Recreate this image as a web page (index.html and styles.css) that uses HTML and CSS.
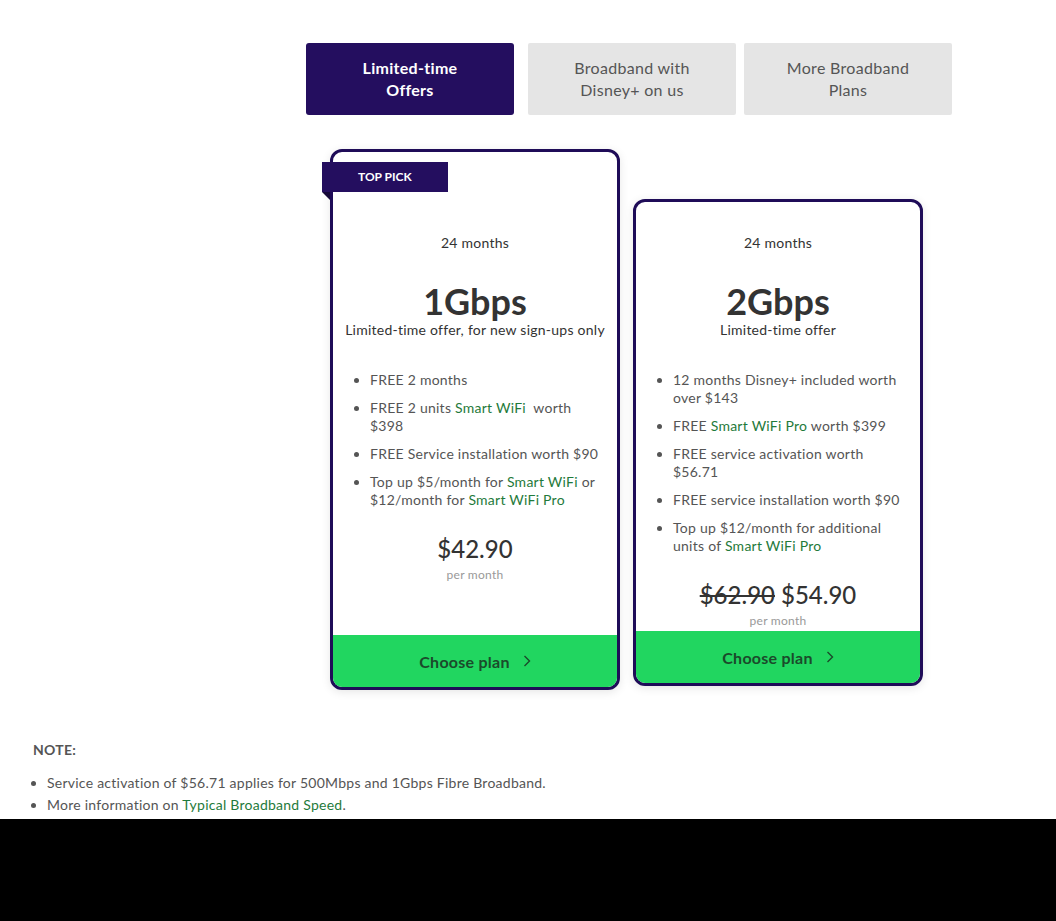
FILE: index.html
```html
<!DOCTYPE html>
<html>
<head>
    <title>Fibre Broadband Plans</title>
    <meta name="viewport" content="width=device-width, initial-scale=1.0">
    <link rel="stylesheet" href="styles.css">
</head>
<body>
    <main class="plans">
        <nav class="tabs">
            <a class="tab active">Limited-time Offers</a>
            <a class="tab">Broadband with Disney+ on us</a>
            <a class="tab">More Broadband Plans</a>
        </nav>

        <div class="cards">
            <!-- 1Gbps plan -->
            <div class="card featured">
                <span class="ribbon">TOP PICK</span>
                <div class="card-body">
                    <p class="term">24 months</p>
                    <h2 class="speed">1Gbps</h2>
                    <p class="tagline">Limited-time offer, for new sign-ups only</p>
                    <ul class="perks">
                        <li>FREE 2 months</li>
                        <li>FREE 2 units <a>Smart WiFi</a>&nbsp; worth $398</li>
                        <li>FREE Service installation worth $90</li>
                        <li>Top up $5/month for <a>Smart WiFi</a> or $12/month for <a>Smart WiFi Pro</a></li>
                    </ul>
                    <div class="price-block">
                        <p class="price">$42.90</p>
                        <p class="per">per month</p>
                    </div>
                </div>
                <a class="choose">Choose plan
                    <svg width="8" height="12" viewBox="0 0 8 12"><polyline points="1.5,1 6.5,6 1.5,11" fill="none" stroke="#1b4a2b" stroke-width="1.4"/></svg>
                </a>
            </div>

            <!-- 2Gbps plan -->
            <div class="card">
                <div class="card-body">
                    <p class="term">24 months</p>
                    <h2 class="speed">2Gbps</h2>
                    <p class="tagline">Limited-time offer</p>
                    <ul class="perks">
                        <li>12 months Disney+ included worth over $143</li>
                        <li>FREE <a>Smart WiFi Pro</a> worth $399</li>
                        <li>FREE service activation worth $56.71</li>
                        <li>FREE service installation worth $90</li>
                        <li>Top up $12/month for additional units of <a>Smart WiFi Pro</a></li>
                    </ul>
                    <div class="price-block">
                        <p class="price"><s>$62.90</s> $54.90</p>
                        <p class="per">per month</p>
                    </div>
                </div>
                <a class="choose">Choose plan
                    <svg width="8" height="12" viewBox="0 0 8 12"><polyline points="1.5,1 6.5,6 1.5,11" fill="none" stroke="#1b4a2b" stroke-width="1.4"/></svg>
                </a>
            </div>
        </div>
    </main>

    <section class="note">
        <h4>NOTE:</h4>
        <ul>
            <li>Service activation of $56.71 applies for 500Mbps and 1Gbps Fibre Broadband.</li>
            <li>More information on <a>Typical Broadband Speed</a>.</li>
        </ul>
    </section>
</body>
</html>
```

FILE: styles.css
```css
html {
    background-color: #000;
}

body {
    margin: 0;
    background-color: #fff;
    font-family: Lato, "Open Sans", sans-serif;
    font-size: 14px;
    letter-spacing: 0.25px;
    color: #555;
    padding-bottom: 3px;
}

a {
    color: #1f7a3b;
    text-decoration: none;
}

p, h2, h4, ul {
    margin: 0;
}

/* tabs + cards column */
.plans {
    margin-left: 306px;
    width: 646px;
    padding-top: 43px;
}

.tabs {
    display: flex;
    gap: 8px;
}

.tab {
    width: 208px;
    height: 72px;
    box-sizing: border-box;
    padding: 0 36px;
    display: flex;
    align-items: center;
    justify-content: center;
    text-align: center;
    font-size: 16px;
    line-height: 22px;
    letter-spacing: 0.3px;
    color: #555;
    background-color: #e5e5e5;
    border-radius: 2px;
}

.tab.active {
    background-color: #240e5f;
    color: #fff;
    font-weight: bold;
    margin-right: 6px;
    border-radius: 3px;
}

.cards {
    display: flex;
    align-items: flex-start;
    gap: 13px;
    padding-left: 24px;
    margin-top: 34px;
}

.card {
    position: relative;
    width: 290px;
    box-sizing: border-box;
    border: 3px solid #1f0c58;
    border-radius: 12px;
    background-color: #fff;
    box-shadow: 0 2px 10px rgba(0, 0, 0, 0.1);
    margin-top: 50px;
}

.card.featured {
    margin-top: 0;
}

.ribbon {
    position: absolute;
    left: -11px;
    top: 10px;
    width: 126px;
    height: 30px;
    box-sizing: border-box;
    padding-left: 36px;
    background-color: #240e5f;
    color: #fff;
    font-size: 12px;
    font-weight: bold;
    letter-spacing: 0;
    line-height: 30px;
}

.ribbon::after {
    content: "";
    position: absolute;
    left: 0;
    top: 100%;
    border-top: 8px solid #150838;
    border-left: 8px solid transparent;
}

.card-body {
    padding: 31px 8px 0;
    text-align: center;
}

.featured .card-body {
    padding-top: 81px;
}

.term {
    line-height: 20px;
    color: #333;
}

.speed {
    margin-top: 29px;
    font-size: 36px;
    line-height: 39px;
    font-weight: bold;
    letter-spacing: 0;
    color: #333;
}

.tagline {
    line-height: 18px;
    color: #333;
}

.perks {
    margin-top: 32px;
    padding: 0 7px 0 29px;
    text-align: left;
    line-height: 18px;
}

.perks li {
    margin-bottom: 10px;
}

.perks li:last-child {
    margin-bottom: 0;
}

.price-block {
    margin-top: 22px;
    padding-bottom: 2px;
}

.featured .price-block {
    padding-bottom: 52px;
}

.price {
    font-size: 24px;
    line-height: 36px;
    letter-spacing: 0;
    color: #333;
    font-weight: 500;
}

.price s {
    text-decoration-thickness: 2px;
}

.per {
    font-size: 12px;
    line-height: 16px;
    color: #999;
}

.choose {
    display: flex;
    align-items: center;
    justify-content: center;
    gap: 13px;
    height: 52px;
    background-color: #21d660;
    border-radius: 0 0 9px 9px;
    color: #1b4a2b;
    font-size: 16px;
    font-weight: bold;
}

/* footnote */
.note {
    margin-top: 50px;
    padding-left: 33px;
}

.note h4 {
    font-size: 14px;
    line-height: 20px;
    color: #555;
}

.note ul {
    margin-top: 12px;
    padding-left: 14px;
    line-height: 22px;
}
```
